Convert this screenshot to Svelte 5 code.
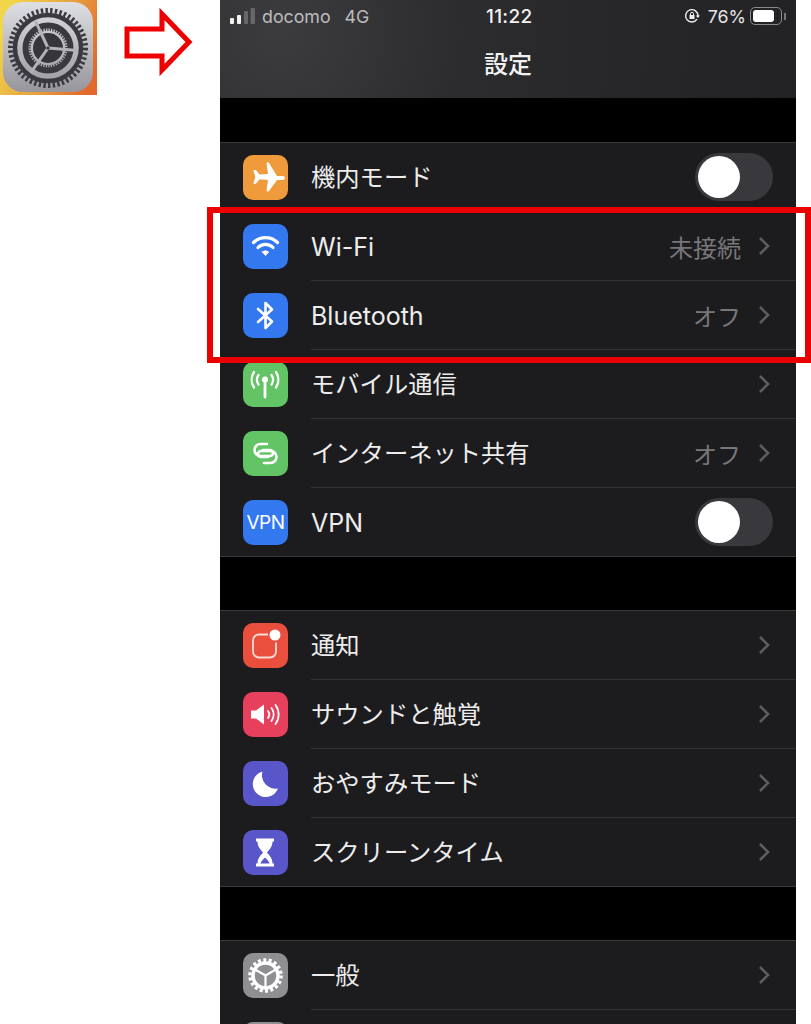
<script>
	const groups = [
		[
			{ icon: 'plane', bg: '#ef9b3c', label: '機内モード', toggle: true },
			{ icon: 'wifi', bg: '#3478f0', label: 'Wi-Fi', value: '未接続', latin: true },
			{ icon: 'bluetooth', bg: '#3478f0', label: 'Bluetooth', value: 'オフ', latin: true },
			{ icon: 'cell', bg: '#63c466', label: 'モバイル通信' },
			{ icon: 'link', bg: '#63c466', label: 'インターネット共有', value: 'オフ' },
			{ icon: 'vpn', bg: '#3478f0', label: 'VPN', toggle: true, latin: true }
		],
		[
			{ icon: 'notify', bg: '#ea4f3d', label: '通知' },
			{ icon: 'sound', bg: '#e6405c', label: 'サウンドと触覚' },
			{ icon: 'moon', bg: '#5856c8', label: 'おやすみモード' },
			{ icon: 'hourglass', bg: '#5856c8', label: 'スクリーンタイム' }
		],
		[
			{ icon: 'gear', bg: '#8e8e93', label: '一般' },
			{ icon: 'none', bg: '#8e8e93', label: '' }
		]
	];

	const toPoint = (a) => ({
		x: Math.cos((a * Math.PI) / 180),
		y: Math.sin((a * Math.PI) / 180)
	});

	// the big app icon has its spokes turned a little, the small one is a plain Y
	const bigSpokes = [5, 125, 245].map(toPoint);
	const spokes = [90, 210, 330].map(toPoint);
</script>

<div class="page">
	<div class="side">
		<svg class="app-icon" viewBox="0 0 97 95" width="97" height="95">
			<defs>
				<linearGradient id="wall" x1="0" y1="0.3" x2="1" y2="0.7">
					<stop offset="0" stop-color="#f2d64a" />
					<stop offset="0.55" stop-color="#e8a040" />
					<stop offset="1" stop-color="#e2682c" />
				</linearGradient>
				<linearGradient id="plate" x1="0" y1="0" x2="0" y2="1">
					<stop offset="0" stop-color="#dedfe3" />
					<stop offset="1" stop-color="#96969c" />
				</linearGradient>
			</defs>
			<rect width="97" height="95" fill="url(#wall)" />
			<rect x="3" y="2" width="90" height="90" rx="20" fill="url(#plate)" />
			<circle cx="48" cy="48" r="37.5" fill="none" stroke="#3a3a3e" stroke-width="5" stroke-dasharray="2.400 2.300" />
			<circle cx="48" cy="48" r="33" fill="none" stroke="#3a3a3e" stroke-width="4.500" />
			<circle cx="48" cy="48" r="22.500" fill="none" stroke="#3a3a3e" stroke-width="6" />
			<circle cx="48" cy="48" r="18.500" fill="none" stroke="#3a3a3e" stroke-width="2.500" stroke-dasharray="1.300 1.300" />
			<circle cx="48" cy="48" r="15" fill="#36363a" />
			{#each bigSpokes as s}
				<line x1="48" y1="48" x2={48 + s.x * 30} y2={48 + s.y * 30} stroke="#b2b2b7" stroke-width="3" />
			{/each}
			<circle cx="48" cy="48" r="1.600" fill="#36363a" />
		</svg>
		<svg class="arrow" viewBox="0 0 72 70" width="72" height="70">
			<polygon points="3,22 38,22 38,7 65,35 38,63 38,49 3,49" fill="#fff" stroke="#ef0000" stroke-width="5" />
		</svg>
	</div>

	<div class="phone">
		<header class="head">
			<div class="status">
				<div class="carrier">
					<svg width="26" height="18" viewBox="0 0 26 18">
						<rect x="0" y="11" width="4" height="6" rx="1" fill="#f2f2f2" />
						<rect x="7" y="8" width="4" height="9" rx="1" fill="#f2f2f2" />
						<rect x="14" y="4" width="4" height="13" rx="1" fill="#67676a" />
						<rect x="20.500" y="1" width="4.500" height="16" rx="1" fill="#67676a" />
					</svg>
					<span>docomo</span>
					<span class="net">4G</span>
				</div>
				<div class="time">11:22</div>
				<div class="right">
					<svg width="16" height="16" viewBox="0 0 16 16">
						<path d="M13 11.200A6.200 6.200 0 1 1 14 8" fill="none" stroke="#eee" stroke-width="1.400" />
						<path d="M11.800 7.400h4.200l-2.100 2.600z" fill="#eee" />
						<rect x="5.500" y="7" width="5" height="4" rx="0.600" fill="#eee" />
						<path d="M6.500 7V5.800a1.500 1.500 0 0 1 3 0V7" fill="none" stroke="#eee" stroke-width="1" />
					</svg>
					<span class="pct">76%</span>
					<div class="battery"><div class="level"></div></div>
					<div class="nub"></div>
				</div>
			</div>
			<div class="title">設定</div>
		</header>

		{#each groups as group}
			<section class="group">
				{#each group as row}
					<div class="row">
						<div class="icon" style="background: {row.bg}">
							{#if row.icon === 'plane'}
								<svg viewBox="0 0 45 45"><path d="M26 8.500c-1-1-2.600-.6-2.400.8L25 19.500l-8.500.6-3.600-4.400h-2.600l2 6.800-2 6.800h2.600l3.600-4.400 8.500.6-1.400 10.200c-.2 1.400 1.400 1.800 2.400.8l8-11h5.500c3 0 3-4 0-4H34z" fill="#fff" transform="translate(0 -.6)" /></svg>
							{:else if row.icon === 'wifi'}
								<svg viewBox="0 0 45 45" fill="none" stroke="#fff" stroke-width="3.200" stroke-linecap="round">
									<path d="M10.500 18.500a17 17 0 0 1 24 0" />
									<path d="M15 23.500a10.500 10.500 0 0 1 15 0" />
									<path d="M19.500 28 22.500 31.500 25.500 28a4.500 4.500 0 0 0-6 0z" fill="#fff" stroke-width="1" stroke-linejoin="round" />
								</svg>
							{:else if row.icon === 'bluetooth'}
								<svg viewBox="0 0 45 45" fill="none" stroke="#fff" stroke-width="2.600" stroke-linejoin="round" stroke-linecap="round">
									<path d="M15 16 29 28.500 22.500 35V10L29 16.500 15 29" />
								</svg>
							{:else if row.icon === 'cell'}
								<svg viewBox="0 0 45 45" fill="none" stroke="#fff" stroke-width="2.300" stroke-linecap="round">
									<circle cx="22" cy="17.500" r="3" fill="#fff" stroke="none" />
									<line x1="22" y1="19" x2="22" y2="35" stroke-width="2.800" />
									<path d="M15.500 13a8.500 8.500 0 0 0 0 9.500M28.500 13a8.500 8.500 0 0 1 0 9.500" />
									<path d="M11 10a14 14 0 0 0 0 15.500M33 10a14 14 0 0 1 0 15.500" />
								</svg>
							{:else if row.icon === 'link'}
								<svg viewBox="0 0 45 45" fill="none" stroke="#fff" stroke-width="2.600" stroke-linecap="round">
									<path d="M24 13h-6.500a6 6 0 0 0 0 12H27a3 3 0 0 0 0-6h-7" />
									<path d="M21 32h6.500a6 6 0 0 0 0-12H18a3 3 0 0 0 0 6h7" />
								</svg>
							{:else if row.icon === 'vpn'}
								<span class="vpn">VPN</span>
							{:else if row.icon === 'notify'}
								<svg viewBox="0 0 45 45" fill="none">
									<path d="M25 11.500h-9a6 6 0 0 0-6 6v11a6 6 0 0 0 6 6h11a6 6 0 0 0 6-6v-9" stroke="#fbdcd6" stroke-width="1.800" />
									<circle cx="32" cy="12" r="5.500" fill="#fff" />
								</svg>
							{:else if row.icon === 'sound'}
								<svg viewBox="0 0 45 45" fill="none" stroke="#fff" stroke-width="1.800" stroke-linecap="round">
									<path d="M8 18.500h5l8-6v20l-8-6H8z" fill="#fff" stroke="none" />
									<path d="M25 19a6 6 0 0 1 0 7" />
									<path d="M28.500 16a11 11 0 0 1 0 13" />
									<path d="M32.500 13a16 16 0 0 1 0 19" />
								</svg>
							{:else if row.icon === 'moon'}
								<svg viewBox="0 0 45 45"><path d="M19.500 10.500A13 13 0 1 0 35 27.500 13.500 13.500 0 0 1 19.500 10.500z" fill="#fff" /></svg>
							{:else if row.icon === 'hourglass'}
								<svg viewBox="0 0 45 45" fill="#fff">
									<path d="M13 8.500h18v3h-1.500c0 5-3 8-5.500 11 2.500 3 5.500 6 5.500 11H31v3H13v-3h1.500c0-5 3-8 5.500-11-2.500-3-5.500-6-5.500-11H13z" />
									<path d="M17.500 33.500c.5-2 2.500-4 4.500-6 2 2 4 4 4.500 6z" fill="#5856c8" />
								</svg>
							{:else if row.icon === 'gear'}
								<svg viewBox="0 0 45 45" fill="none" stroke="#fff">
									<circle cx="22.500" cy="22.500" r="15.500" stroke-width="3.500" stroke-dasharray="3 2.410" />
									<circle cx="22.500" cy="22.500" r="12.500" stroke-width="3.500" />
									{#each spokes as s}
										<line x1="22.500" y1="22.500" x2={22.5 + s.x * 12} y2={22.5 + s.y * 12} stroke-width="2.200" />
									{/each}
								</svg>
							{/if}
						</div>
						<div class="body">
							<span class="label" class:latin={row.latin}>{row.label}</span>
							{#if row.toggle}
								<div class="toggle"><div class="knob"></div></div>
							{:else if row.label}
								{#if row.value}<span class="value">{row.value}</span>{/if}
								<svg class="chev" width="12" height="20" viewBox="0 0 12 20">
									<path d="M2 2l8 8-8 8" fill="none" stroke="#5e5e62" stroke-width="2.600" />
								</svg>
							{/if}
						</div>
					</div>
				{/each}
			</section>
		{/each}
	</div>

	<div class="mark"></div>
</div>

<style>
	:global(body) {
		margin: 0;
		background: #fff;
	}

	.page {
		position: relative;
		display: flex;
		width: 811px;
		height: 1024px;
		overflow: hidden;
		font-family: Inter, 'Noto Sans CJK JP', sans-serif;
	}

	.side {
		display: flex;
		align-items: flex-start;
		width: 220px;
		flex: none;
	}

	.app-icon {
		display: block;
		flex: none;
	}

	.arrow {
		display: block;
		margin: 7px 0 0 27px;
	}

	.phone {
		width: 576px;
		flex: none;
		background: #000;
	}

	.head {
		height: 98px;
		box-sizing: border-box;
		background: radial-gradient(circle at 60px 30px, #3c3c3f 0, #2c2c2e 35%, #222224 100%);
	}

	.status {
		position: relative;
		display: flex;
		justify-content: space-between;
		align-items: center;
		height: 32px;
		padding: 0 10px;
	}

	.carrier {
		display: flex;
		align-items: center;
		gap: 6px;
		font-size: 17.800px;
		color: #bcbcbe;
	}

	.net {
		margin-left: 8px;
	}

	.time {
		position: absolute;
		left: 266px;
		font-size: 19px;
		font-weight: 500;
		letter-spacing: 0.300px;
		color: #f4f4f4;
	}

	.right {
		display: flex;
		align-items: center;
		gap: 4px;
	}

	.pct {
		margin-left: 4px;
		font-size: 17.800px;
		color: #e4e4e4;
	}

	.battery {
		width: 32px;
		height: 18px;
		box-sizing: border-box;
		padding: 2px;
		border: 1px solid #8a8a8c;
		border-radius: 5px;
	}

	.level {
		width: 80%;
		height: 100%;
		border-radius: 3px;
		background: #fff;
	}

	.nub {
		width: 2px;
		height: 7px;
		margin-left: -2px;
		background: #777;
	}

	.title {
		margin-top: 15px;
		text-align: center;
		font-size: 24px;
		line-height: 36px;
		font-weight: 500;
		color: #f2f2f2;
	}

	.group {
		margin-top: 44px;
		border-top: 1px solid #3a3a3c;
		background: #1c1c1e;
	}

	.group + .group {
		margin-top: 53px;
	}

	.row {
		display: flex;
		height: 69px;
		padding-left: 23px;
	}

	.icon {
		flex: none;
		display: flex;
		align-items: center;
		justify-content: center;
		width: 45px;
		height: 45px;
		margin-top: 12px;
		border-radius: 10px;
	}

	.icon svg {
		display: block;
		width: 45px;
		height: 45px;
	}

	.vpn {
		font-size: 19px;
		color: #fff;
		letter-spacing: -0.500px;
	}

	.body {
		flex: 1;
		display: flex;
		align-items: center;
		margin-left: 23px;
		padding-right: 26px;
		border-bottom: 1px solid #333335;
	}

	.row:last-child .body {
		border-bottom: none;
	}

	.group:not(:last-child) {
		border-bottom: 1px solid #3a3a3c;
	}

	.group:not(:last-child) .row:last-child {
		height: 68px;
	}

	.label {
		flex: 1;
		padding-bottom: 3px;
		font-size: 24.300px;
		color: #ededed;
	}

	.label.latin {
		padding: 2px 0 0;
		font-size: 25px;
	}

	.value {
		margin-right: 17px;
		font-size: 24px;
		color: #77777a;
	}

	.chev {
		display: block;
	}

	.toggle {
		width: 78px;
		height: 48px;
		margin-right: -3px;
		box-sizing: border-box;
		padding: 3px;
		border-radius: 24px;
		background: #39393d;
	}

	.knob {
		width: 42px;
		height: 42px;
		border-radius: 50%;
		background: #fff;
	}

	.mark {
		position: absolute;
		left: 207px;
		top: 207px;
		width: 604px;
		height: 156px;
		box-sizing: border-box;
		border: 6px solid #ea0000;
		pointer-events: none;
	}
</style>
